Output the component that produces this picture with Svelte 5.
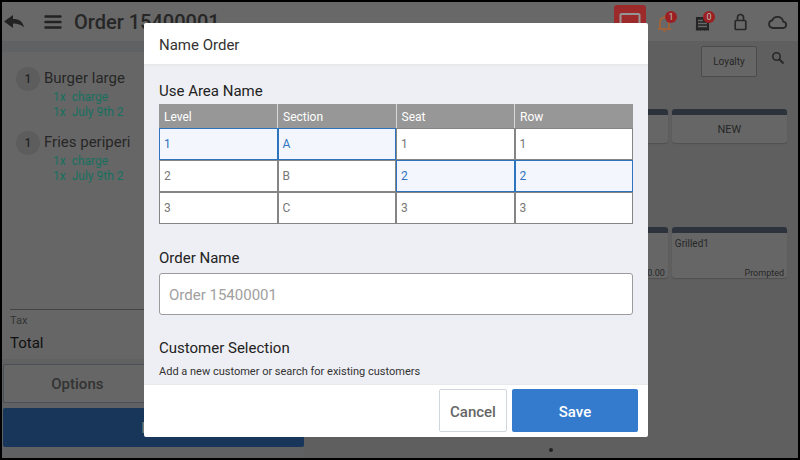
<script>
  const items = [
    { qty: 1, name: 'Burger large', mods: ['charge', 'July 9th 2'] },
    { qty: 1, name: 'Fries periperi', mods: ['charge', 'July 9th 2'] }
  ];
  const columns = [
    { name: 'Level', values: ['1', '2', '3'] },
    { name: 'Section', values: ['A', 'B', 'C'] },
    { name: 'Seat', values: ['1', '2', '3'] },
    { name: 'Row', values: ['1', '2', '3'] }
  ];
  let picked = $state([0, 0, 1, 1]);
  let orderName = $state('');
</script>

<div class="app">
  <header class="topbar">
    <button class="icon back" aria-label="Back">
      <svg width="20" height="14" viewBox="0 0 20 14"><path d="M9 0v4c6 0 10 2.500 11 8.500-3-3-6-4-11-4V13L0 6.500z" fill="#222" /></svg>
    </button>
    <button class="icon menu" aria-label="Menu">
      <svg width="18" height="14" viewBox="0 0 18 14"><path d="M1.500 1.500h15M1.500 7h15M1.500 12.500h15" stroke="#222" stroke-width="2.400" stroke-linecap="round" /></svg>
    </button>
    <h1>Order 15400001</h1>
    <nav class="status">
      <button class="icon screen" aria-label="Display">
        <svg width="32" height="34" viewBox="0 0 32 34"><rect width="32" height="34" rx="3" fill="#9c2a2a" /><rect x="6.500" y="9" width="19" height="13" rx="1" fill="none" stroke="#959595" stroke-width="2" /></svg>
      </button>
      <button class="icon" aria-label="Alerts">
        <svg width="24" height="24" viewBox="0 0 24 24"><path d="M6 19h13M8 18.500V13c0-3 1.500-5.500 4.500-5.500S17 10 17 13v5.500M12.500 5.500V8" fill="none" stroke="#ab6230" stroke-width="1.600" /><path d="M11 20.500h3a1.500 1.500 0 0 1-3 0z" fill="#ab6230" /></svg>
        <span class="badge">1</span>
      </button>
      <button class="icon" aria-label="Receipts">
        <svg width="24" height="24" viewBox="0 0 24 24"><path d="M6 7h13v14l-1.100-1-1.100 1-1.100-1-1.100 1-1.100-1-1.100 1-1.100-1-1.100 1-1.100-1-1.100 1-1.100-1-1 1z" fill="#252525" /><path d="M8 10.500h5M8 13.500h9M8 16.500h9" stroke="#686868" stroke-width="1.300" /></svg>
        <span class="badge">0</span>
      </button>
      <button class="icon" aria-label="Lock">
        <svg width="24" height="24" viewBox="0 0 24 24"><g fill="none" stroke="#282828" stroke-width="1.700"><rect x="7.200" y="10.500" width="10.600" height="9" rx="1" /><path d="M9.500 10.500V7.500a3 3 0 0 1 6 0v3" /></g></svg>
      </button>
      <button class="icon" aria-label="Cloud">
        <svg width="24" height="24" viewBox="0 0 24 24"><path d="M6.500 18h10.200a3.200 3.200 0 0 0 .5-6.400A5.800 5.800 0 0 0 6.200 10.300 3.900 3.900 0 0 0 6.500 18z" fill="none" stroke="#282828" stroke-width="1.800" /></svg>
      </button>
    </nav>
  </header>

  <div class="main">
    <section class="order">
      <div class="ticket">
        <ul>
          {#each items as item}
            <li>
              <span class="qty">{item.qty}</span>
              <div>
                <div class="name">{item.name}</div>
                {#each item.mods as mod}
                  <div class="mod"><span>1x</span><span>{mod}</span></div>
                {/each}
              </div>
            </li>
          {/each}
        </ul>
        <div class="sums">
          <div class="tax">Tax</div>
          <div class="total">Total</div>
        </div>
      </div>
      <div class="actions">
        <button class="plain">Options</button>
        <button class="plain" aria-label="More"></button>
        <button class="pay">Pay</button>
      </div>
    </section>

    <section class="catalog">
      <div class="tools">
        <button class="loyalty">Loyalty</button>
        <button class="icon" aria-label="Search">
          <svg width="14" height="14" viewBox="0 0 14 14"><circle cx="5.500" cy="5.500" r="3.700" fill="none" stroke="#282828" stroke-width="1.600" /><path d="M8 8l4.500 4.500" stroke="#282828" stroke-width="2" /></svg>
        </button>
      </div>
      <div class="tiles groups">
        <button class="tile third" aria-label="Group"></button>
        <button class="tile">NEW</button>
      </div>
      <div class="tiles products">
        <button class="tile third"><span></span><small>0.00</small></button>
        <button class="tile"><span>Grilled1</span><small>Prompted</small></button>
      </div>
      <div class="dot"></div>
    </section>
  </div>

  <div class="overlay">
    <div class="dialog" role="dialog" aria-labelledby="dialog-title">
      <h2 id="dialog-title">Name Order</h2>
      <div class="body">
        <h3 id="area">Use Area Name</h3>
        <table aria-labelledby="area">
          <thead>
            <tr>{#each columns as col}<th scope="col">{col.name}</th>{/each}</tr>
          </thead>
          <tbody>
            {#each [0, 1, 2] as row}
              <tr>
                {#each columns as col, c}
                  <td>
                    <button class:on={picked[c] === row} aria-pressed={picked[c] === row} onclick={() => (picked[c] = row)}>{col.values[row]}</button>
                  </td>
                {/each}
              </tr>
            {/each}
          </tbody>
        </table>
        <label for="order-name">Order Name</label>
        <input id="order-name" type="text" placeholder="Order 15400001" bind:value={orderName} />
        <h3>Customer Selection</h3>
        <p>Add a new customer or search for existing customers</p>
      </div>
      <footer>
        <button class="cancel">Cancel</button>
        <button class="save">Save</button>
      </footer>
    </div>
  </div>
</div>

<style>
  :global(body) { background: #000; }
  .app, .app * { box-sizing: border-box; }
  .app {
    position: relative;
    display: flex;
    flex-direction: column;
    min-height: 100vh;
    border: 2px solid #000;
    background: #5f5f5f;
    color: #262626;
    font-family: Roboto, sans-serif;
  }
  button, input { font: inherit; color: inherit; margin: 0; }
  button { padding: 0; border: 0; background: none; }
  h1, h2, h3, p, ul { margin: 0; padding: 0; font-weight: 400; }
  ul { list-style: none; }
  svg { display: block; }

  .topbar { display: flex; align-items: center; height: 39px; padding: 0 8px 0 2px; background: #686868; }
  .icon { position: relative; flex: none; }
  .menu { margin: 0 12px 0 20px; }
  h1 { padding-top: 1px; font-size: 20px; line-height: 24px; font-weight: 500; }
  .status { display: flex; align-items: center; gap: 14px; margin-left: auto; }
  .screen { margin-right: -8px; }
  .badge {
    position: absolute;
    top: 1px;
    right: -1px;
    width: 12px;
    height: 12px;
    border-radius: 50%;
    background: #9c2022;
    color: #bbb;
    font-size: 9px;
    line-height: 12px;
    text-align: center;
  }

  .main { display: flex; flex: 1; }
  .order { display: flex; flex-direction: column; width: 38%; padding-top: 11px; background: #5f6163; }
  .ticket { display: flex; flex: 1; flex-direction: column; padding: 15px 8px 5px; background: #666; }
  li { display: flex; gap: 4px; height: 64px; padding-left: 6px; }
  .qty { width: 24px; height: 24px; border-radius: 50%; background: #5d5d5d; font-size: 12px; font-weight: 500; line-height: 24px; text-align: center; }
  .name { font-size: 15px; line-height: 23px; }
  .mod { display: flex; gap: 6px; padding-left: 9px; color: #17705f; font-size: 12px; line-height: 15px; }
  .sums { margin-top: auto; border-top: 1px solid #444; }
  .tax { font-size: 11px; line-height: 22px; color: #333; }
  .total { font-size: 15px; line-height: 22px; color: #111; }
  .actions { display: grid; grid-template-columns: 1fr 1fr; gap: 5px 4px; padding: 5px 0 11px 1px; }
  .actions button { height: 39px; border-radius: 2px; font-size: 15px; font-weight: 500; }
  .actions .plain { border: 1px solid #4b5056; background: #666; color: #333; }
  .actions .pay { grid-column: 1 / -1; background: #17365a; color: #777; }

  .catalog { display: flex; flex: 1; flex-direction: column; padding: 5px 11px 6px 10px; }
  .tools { display: flex; justify-content: flex-end; gap: 14px; height: 31px; padding-right: 2px; }
  .tools .icon { align-self: flex-start; padding-top: 5px; }
  .loyalty { width: 56px; border: 1px solid #484c4f; border-radius: 2px; background: #666; font-size: 10px; }
  .tiles { display: grid; grid-template-columns: repeat(4, 1fr); gap: 4px; }
  .groups { margin-top: 32px; }
  .products { margin-top: 84px; }
  .tile { height: 34px; border-top: 6px solid #2c333c; border-radius: 3px; background: #666; box-shadow: 0 1px 1px #505050; font-size: 11px; }
  .third { grid-column: 3; }
  .products .tile { display: flex; flex-direction: column; justify-content: space-between; height: 51px; padding: 4px 3px 0; font-size: 10px; line-height: 14px; text-align: left; }
  .tile small { align-self: flex-end; font-size: 9px; line-height: 10px; }
  .dot { width: 4px; height: 4px; margin: auto auto 0; border-radius: 50%; background: #222; }

  .overlay { position: absolute; inset: -2px; display: grid; grid-template-columns: 18fr 63fr 19fr; padding: 23px 0; }
  .dialog { grid-column: 2; display: flex; flex-direction: column; overflow: hidden; border-radius: 2px; background: #fff; }
  h2 { padding: 11px 15px 8px; border-bottom: 2px solid #e8e9ea; color: #333; font-size: 15px; line-height: 22px; }
  .body { flex: 1; padding: 15px 15px 0; background: #eeeff4; color: #222; }
  h3, label { display: block; font-size: 15px; line-height: 20px; }
  table { width: 100%; margin: 3px 0 24px; table-layout: fixed; border-collapse: collapse; }
  th { height: 24px; padding: 2px 5px 0; border-left: 1px solid #d8d8d8; background: #979797; color: #fff; font-size: 12px; font-weight: 400; text-align: left; }
  th:first-child { border-left: 0; }
  td { padding: 0; }
  td button { display: block; width: 100%; height: 32px; padding: 0 4px; border: 1px solid #858585; background: #fff; color: #777; font-size: 12px; text-align: left; }
  td button.on { border-color: #2d73bd; background: #f3f7fd; color: #2d73bd; }
  input { display: block; width: 100%; height: 42px; margin: 5px 0 23px; padding: 2px 9px 0; border: 1px solid #9c9c9c; border-radius: 3px; background: #fff; font-size: 15px; }
  input::placeholder { color: #a0a0a0; opacity: 1; }
  p { padding-top: 7px; font-size: 11px; line-height: 14px; color: #333; }
  footer { display: flex; justify-content: flex-end; gap: 5px; padding: 4px 10px 5px; border-top: 1px solid #e8e9ea; }
  footer button { height: 43px; padding-top: 2px; border-radius: 2px; font-size: 15px; font-weight: 500; }
  .cancel { width: 68px; border: 1px solid #cfd6de; color: #666; }
  .save { width: 126px; background: #347bcd; color: #fff; }
</style>
